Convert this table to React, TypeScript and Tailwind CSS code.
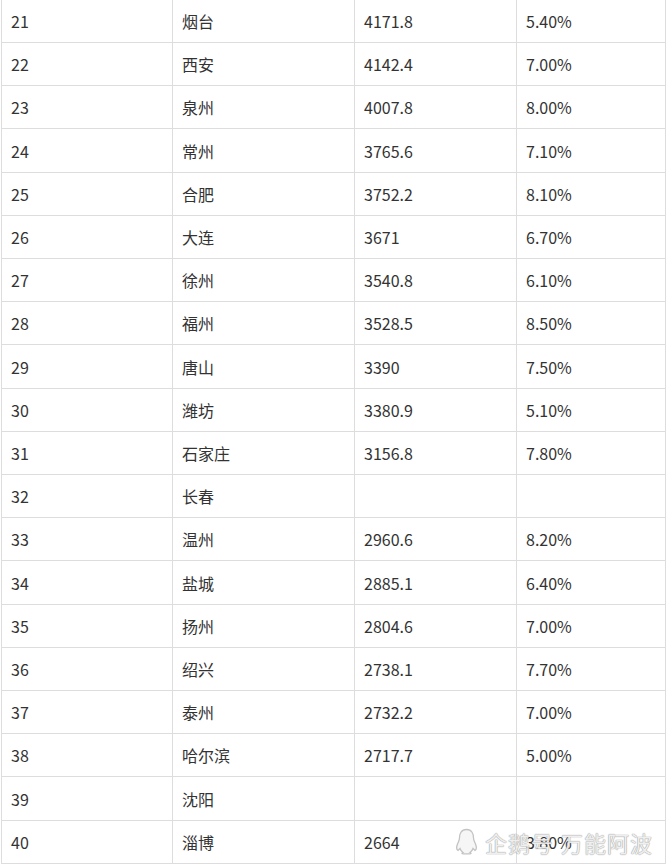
import React from "react";

const rows: [string, string, string, string][] = [
  ["21", "烟台", "4171.8", "5.40%"],
  ["22", "西安", "4142.4", "7.00%"],
  ["23", "泉州", "4007.8", "8.00%"],
  ["24", "常州", "3765.6", "7.10%"],
  ["25", "合肥", "3752.2", "8.10%"],
  ["26", "大连", "3671", "6.70%"],
  ["27", "徐州", "3540.8", "6.10%"],
  ["28", "福州", "3528.5", "8.50%"],
  ["29", "唐山", "3390", "7.50%"],
  ["30", "潍坊", "3380.9", "5.10%"],
  ["31", "石家庄", "3156.8", "7.80%"],
  ["32", "长春", "", ""],
  ["33", "温州", "2960.6", "8.20%"],
  ["34", "盐城", "2885.1", "6.40%"],
  ["35", "扬州", "2804.6", "7.00%"],
  ["36", "绍兴", "2738.1", "7.70%"],
  ["37", "泰州", "2732.2", "7.00%"],
  ["38", "哈尔滨", "2717.7", "5.00%"],
  ["39", "沈阳", "", ""],
  ["40", "淄博", "2664", "3.80%"],
];

const FONT = "[font-family:'Noto_Sans_CJK_SC','Open_Sans',sans-serif]";

function Cell({ text, w, first }: { text: string; w: string; first?: boolean }) {
  return (
    <div
      className={`${w} h-full flex items-center pl-[9px] border-r border-[#dddddd] ${
        first ? "border-l" : ""
      } text-[16px] text-[#333333] whitespace-nowrap`}
    >
      {text}
    </div>
  );
}

export default function App() {
  return (
    <div className={`relative w-[667px] h-[865px] bg-white overflow-hidden ${FONT}`}>
      <div className="ml-[1px] w-[665px] flex flex-col">
        {rows.map((r, i) => (
          <div
            key={r[0]}
            className={`flex border-b border-[#dddddd] ${
              i % 5 === 3 ? "h-[44px]" : "h-[43px]"
            }`}
          >
            <Cell text={r[0]} w="w-[172px]" first />
            <Cell text={r[1]} w="w-[182px]" />
            <Cell text={r[2]} w="w-[162px]" />
            <Cell text={r[3]} w="w-[149px]" />
          </div>
        ))}
      </div>
      <div className="absolute left-[455px] top-[828px] flex items-center gap-[7px] opacity-90">
        <svg width="23" height="27" viewBox="0 0 23 27" fill="none">
          <path
            d="M11.5 1.5 C6 1.5 4.5 6 4.5 10 C4.5 12 3.5 13.5 2.5 16 C1.5 18.5 1.5 21.5 3 22.5 C4 21.5 4.5 21 5 20.5 C5.5 22 6.5 23.5 8 24.5 C6.5 25 6.5 25.8 8 25.8 L15 25.8 C16.5 25.8 16.5 25 15 24.5 C16.5 23.5 17.5 22 18 20.5 C18.5 21 19 21.5 20 22.5 C21.5 21.5 21.5 18.5 20.5 16 C19.5 13.5 18.5 12 18.5 10 C18.5 6 17 1.5 11.5 1.5 Z"
            stroke="#bdbdbd"
            strokeWidth="1.3"
            fill="#f6f6f6"
          />
        </svg>
        <span className="text-[22px] leading-none text-[#eeeeee] [text-shadow:0_0_1px_#8a8a8a,0_0_1px_#9a9a9a] tracking-[1px]">
          企鹅号
        </span>
        <span className="text-[22px] leading-none text-[#eeeeee] [text-shadow:0_0_1px_#8a8a8a,0_0_1px_#9a9a9a] tracking-[1px]">
          万能阿波
        </span>
      </div>
    </div>
  );
}
